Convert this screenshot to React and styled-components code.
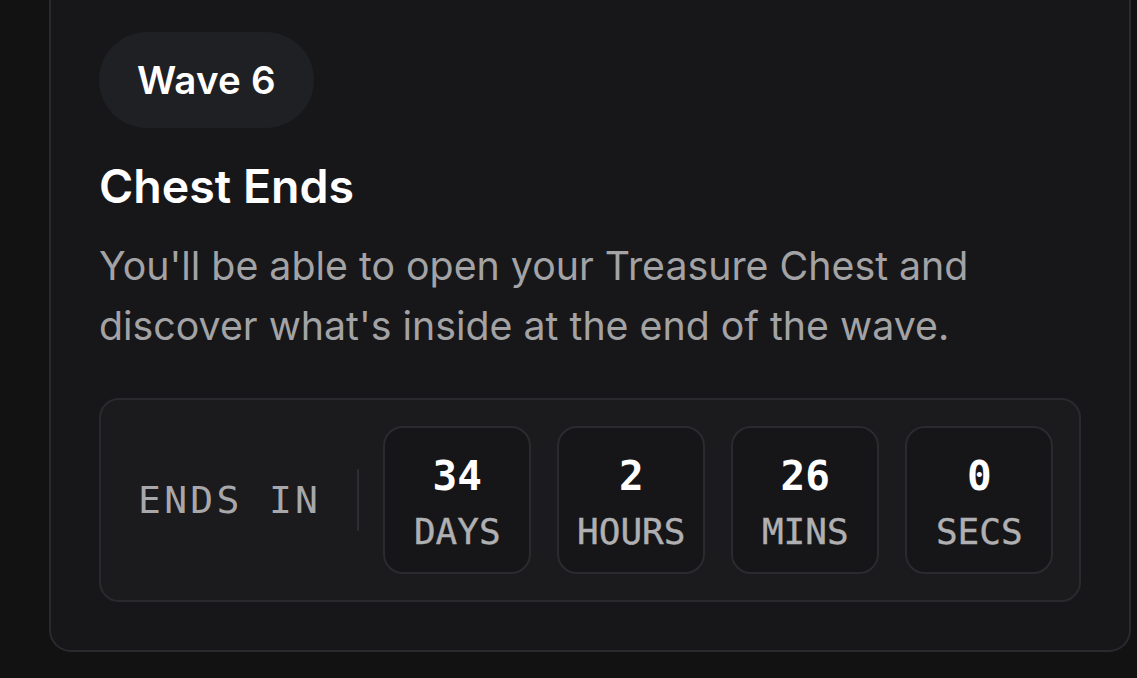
import React from "react";
import styled, { createGlobalStyle } from "styled-components";

const Global = createGlobalStyle`
  html, body { margin: 0; padding: 0; background: #121213; }
  body { font-family: Inter, "Noto Sans", sans-serif; -webkit-font-smoothing: antialiased; }
`;

const Page = styled.div`
  width: 1137px;
  height: 678px;
  overflow: hidden;
  box-sizing: border-box;
  padding: 0 6px 0 49px;
  background: #121213;
`;

const Card = styled.section`
  box-sizing: border-box;
  background: #171719;
  border: 2px solid #2a2a2e;
  border-top: none;
  border-radius: 0 0 22px 22px;
  padding: 32px 48px 48px 48px;
  display: flex;
  flex-direction: column;
  align-items: flex-start;
`;

const Pill = styled.div`
  height: 96px;
  padding: 0 38px;
  border-radius: 48px;
  background: #1f2023;
  color: #fff;
  display: flex;
  align-items: center;
  font-size: 38.5px;
  font-weight: 600;
  letter-spacing: 0.2px;
`;

const Title = styled.h2`
  margin: 30px 0 0 0;
  color: #fff;
  font-size: 46.5px;
  font-weight: 600;
  line-height: 56px;
`;

const Desc = styled.p`
  margin: 22px 0 0 0;
  color: #a3a3a6;
  font-size: 39.3px;
  font-weight: 400;
  line-height: 60px;
`;

const Countdown = styled.div`
  box-sizing: border-box;
  align-self: stretch;
  margin-top: 42px;
  border: 2px solid #2a2a2e;
  border-radius: 20px;
  background: #1b1b1e;
  padding: 26px 25px 26px 37px;
  display: flex;
  align-items: center;
`;

const EndsLabel = styled.span`
  font-family: "DejaVu Sans Mono", "Liberation Mono", monospace;
  color: #a8a8ab;
  font-size: 38px;
  letter-spacing: 3.3px;
`;

const Divider = styled.span`
  width: 2px;
  height: 62px;
  margin: 0 24px 0 36px;
  background: #2e2e32;
  border-radius: 1px;
`;

const Units = styled.div`
  display: flex;
  gap: 26px;
`;

const Unit = styled.div`
  box-sizing: border-box;
  width: 148px;
  height: 148px;
  padding-top: 20px;
  border: 2px solid #2b2b2f;
  border-radius: 20px;
  background: #161618;
  display: flex;
  flex-direction: column;
  align-items: center;
  font-family: "DejaVu Sans Mono", "Liberation Mono", monospace;
`;

const Num = styled.span`
  color: #fff;
  font-size: 41px;
  font-weight: 600;
  line-height: 56px;
`;

const Label = styled.span`
  color: #b0b0b3;
  font-size: 36px;
  font-weight: 500;
  line-height: 56px;
  -webkit-text-stroke: 0.4px #b0b0b3;
`;

const units = [
  { n: "34", l: "DAYS" },
  { n: "2", l: "HOURS" },
  { n: "26", l: "MINS" },
  { n: "0", l: "SECS" },
];

export default function App() {
  return (
    <Page>
      <Global />
      <Card>
        <Pill>Wave 6</Pill>
        <Title>Chest Ends</Title>
        <Desc>
          You'll be able to open your Treasure Chest and discover what's inside at the end of the wave.
        </Desc>
        <Countdown>
          <EndsLabel>ENDS IN</EndsLabel>
          <Divider />
          <Units>
            {units.map((u) => (
              <Unit key={u.l}>
                <Num>{u.n}</Num>
                <Label>{u.l}</Label>
              </Unit>
            ))}
          </Units>
        </Countdown>
      </Card>
    </Page>
  );
}
